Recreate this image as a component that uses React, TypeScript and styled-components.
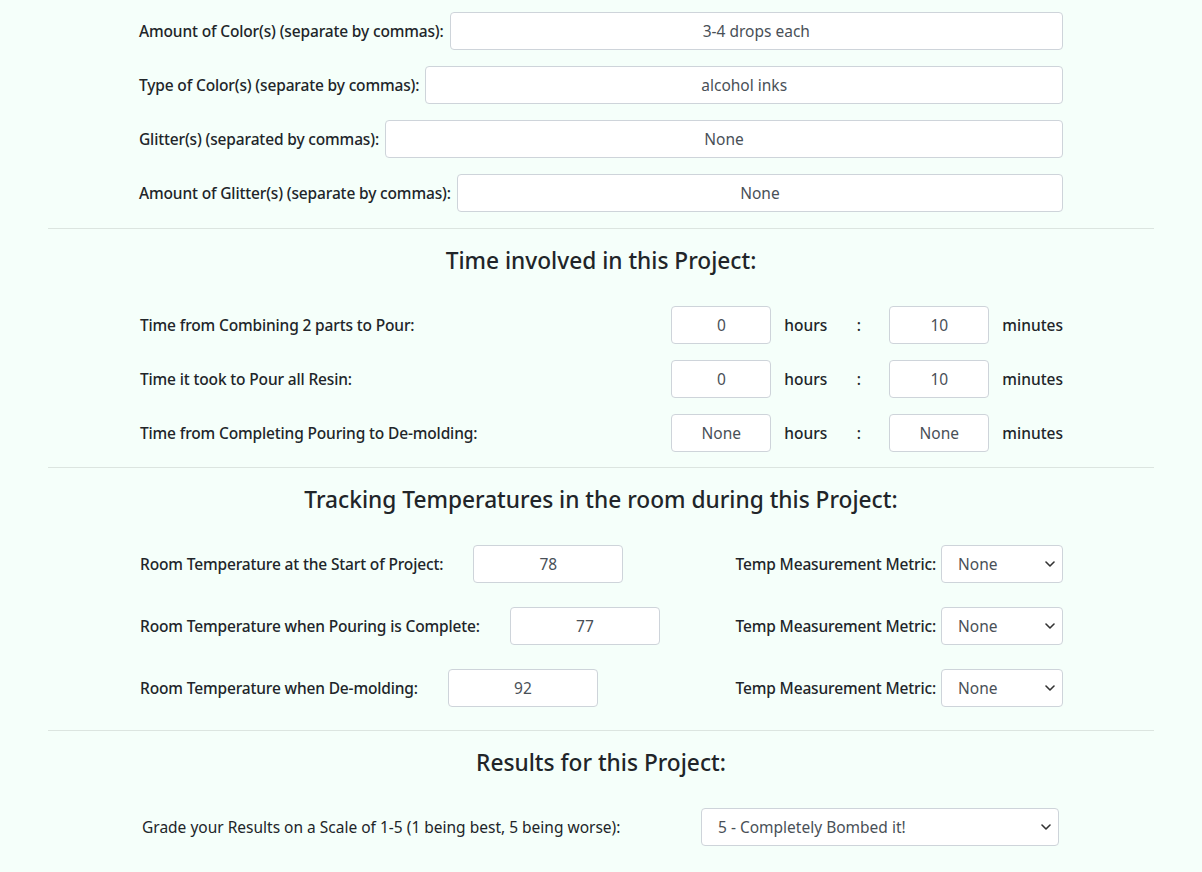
import React from 'react';
import styled, { createGlobalStyle } from 'styled-components';

const GlobalStyle = createGlobalStyle`
  body {
    margin: 0;
    background: #f5fffa;
    font-family: "Noto Sans", "Open Sans", sans-serif;
    color: #212529;
  }
`;

const colorRows = [
  { label: 'Amount of Color(s) (separate by commas):', value: '3-4 drops each' },
  { label: 'Type of Color(s) (separate by commas):', value: 'alcohol inks' },
  { label: 'Glitter(s) (separated by commas):', value: 'None' },
  { label: 'Amount of Glitter(s) (separate by commas):', value: 'None' },
];

const timeRows = [
  { label: 'Time from Combining 2 parts to Pour:', hours: '0', minutes: '10' },
  { label: 'Time it took to Pour all Resin:', hours: '0', minutes: '10' },
  { label: 'Time from Completing Pouring to De-molding:', hours: 'None', minutes: 'None' },
];

const tempRows = [
  { label: 'Room Temperature at the Start of Project:', value: '78' },
  { label: 'Room Temperature when Pouring is Complete:', value: '77' },
  { label: 'Room Temperature when De-molding:', value: '92' },
];

const Chevron = () => (
  <svg width="10" height="6" viewBox="0 0 10 6" fill="none">
    <path d="M1 1l4 4 4-4" stroke="#333" strokeWidth="1.6" strokeLinecap="round" strokeLinejoin="round" />
  </svg>
);

const Select = ({ value, width }: { value: string; width: number }) => (
  <SelectWrap $width={width}>
    <SelectBox value={value} onChange={() => {}}>
      <option>{value}</option>
    </SelectBox>
    <ChevronSlot>
      <Chevron />
    </ChevronSlot>
  </SelectWrap>
);

const App = () => {
  return (
    <>
      <GlobalStyle />
      <Container>
        <Section $top $end={16}>
          {colorRows.map((r) => (
            <WideRow key={r.label}>
              <Label>{r.label}</Label>
              <TextInput value={r.value} readOnly />
            </WideRow>
          ))}
        </Section>

        <Divider />
        <Heading>Time involved in this Project:</Heading>
        <Section $end={15}>
          {timeRows.map((r) => (
            <SpreadRow key={r.label} $gap={16}>
              <Label>{r.label}</Label>
              <TimeGroup>
                <SmallInput value={r.hours} readOnly $width={100} />
                <Unit>hours</Unit>
                <Colon>:</Colon>
                <SmallInput value={r.minutes} readOnly $width={100} />
                <Unit>minutes</Unit>
              </TimeGroup>
            </SpreadRow>
          ))}
        </Section>

        <Divider />
        <Heading>Tracking Temperatures in the room during this Project:</Heading>
        <Section $end={23}>
          {tempRows.map((r) => (
            <SpreadRow key={r.label} $gap={24}>
              <TempLeft>
                <Label>{r.label}</Label>
                <SmallInput value={r.value} readOnly $width={150} />
              </TempLeft>
              <TempRight>
                <Label>Temp Measurement Metric:</Label>
                <Select value="None" width={122} />
              </TempRight>
            </SpreadRow>
          ))}
        </Section>

        <Divider />
        <Heading>Results for this Project:</Heading>
        <Section $end={24}>
          <GradeRow>
            <GradeLabel>Grade your Results on a Scale of 1-5 (1 being best, 5 being worse):</GradeLabel>
            <Select value="5 - Completely Bombed it!" width={358} />
          </GradeRow>
        </Section>
      </Container>
    </>
  );
};

const Container = styled.div`
  margin: 0 48px;
`;

const Section = styled.div<{ $top?: boolean; $end: number }>`
  padding-top: ${(p) => (p.$top ? '12px' : '0')};
  & > div:last-child {
    margin-bottom: ${(p) => p.$end}px;
  }
`;

const WideRow = styled.div`
  display: flex;
  align-items: center;
  gap: 6px;
  padding: 0 91px;
  margin-bottom: 16px;
`;

const SpreadRow = styled.div<{ $gap: number }>`
  display: flex;
  align-items: center;
  justify-content: space-between;
  padding: 0 91px 0 92px;
  margin-bottom: ${(p) => p.$gap}px;
`;

const GradeRow = styled.div`
  display: flex;
  align-items: center;
  justify-content: space-between;
  padding: 0 95px 0 94px;
`;

const Label = styled.label`
  font-size: 15.5px;
  font-weight: 500;
  white-space: nowrap;
  color: #212529;
  letter-spacing: -0.15px;
`;

const GradeLabel = styled.label`
  font-size: 15.5px;
  font-weight: 400;
  white-space: nowrap;
  color: #212529;
`;

const TextInput = styled.input`
  flex: 1;
  min-width: 0;
  box-sizing: border-box;
  height: 38px;
  border: 1px solid #ced4da;
  border-radius: 4px;
  background: #fff;
  font-family: inherit;
  font-size: 15.5px;
  color: #495057;
  text-align: center;
  padding: 6px 12px;
  outline: none;
`;

const SmallInput = styled(TextInput)<{ $width: number }>`
  flex: none;
  width: ${(p) => p.$width}px;
`;

const TimeGroup = styled.div`
  display: flex;
  align-items: center;
`;

const Unit = styled.span`
  font-size: 15.5px;
  font-weight: 500;
  margin-left: 13px;
  min-width: 60px;
`;

const Colon = styled.span`
  font-size: 15.5px;
  font-weight: 500;
  width: 29px;
  text-align: center;
  margin-right: 16px;
`;

const TempLeft = styled.div`
  display: flex;
  align-items: center;
  gap: 30px;
`;

const TempRight = styled.div`
  display: flex;
  align-items: center;
  gap: 5px;
`;

const Divider = styled.hr`
  border: 0;
  border-top: 1px solid rgba(0, 0, 0, 0.1);
  margin: 0;
`;

const Heading = styled.h4`
  margin: 18px 0 32px;
  font-size: 22.7px;
  font-weight: 500;
  line-height: 27px;
  text-align: center;
  color: #212529;
`;

const SelectWrap = styled.div<{ $width: number }>`
  position: relative;
  width: ${(p) => p.$width}px;
  flex: none;
`;

const SelectBox = styled.select`
  appearance: none;
  width: 100%;
  height: 38px;
  box-sizing: border-box;
  border: 1px solid #ced4da;
  border-radius: 4px;
  background: #fff;
  font-family: inherit;
  font-size: 15.5px;
  color: #495057;
  padding: 0 28px 0 16px;
  outline: none;
`;

const ChevronSlot = styled.span`
  position: absolute;
  right: 8px;
  top: 50%;
  transform: translateY(-50%);
  display: flex;
  pointer-events: none;
`;

export default App;
